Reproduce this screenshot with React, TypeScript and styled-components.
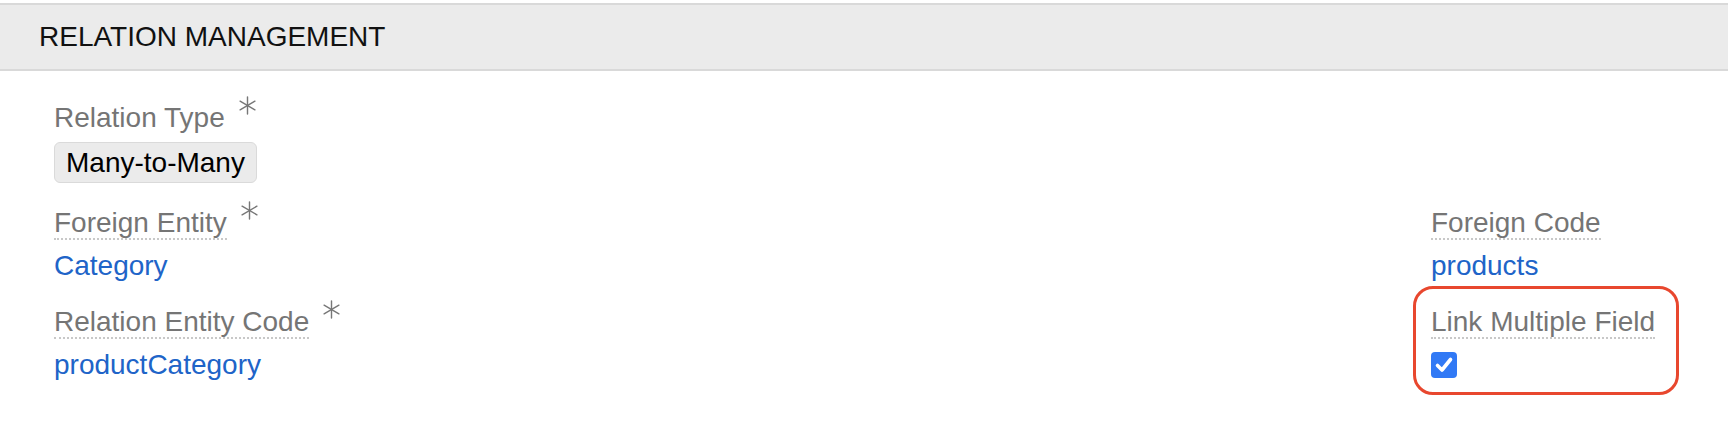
import React from 'react';
import styled, { createGlobalStyle } from 'styled-components';

const GlobalStyle = createGlobalStyle`
    body {
        margin: 0;
        background: #fff;
        font-family: "Liberation Sans", Arial, sans-serif;
    }
`;

const Panel = styled.section`
    padding-top: 3px;
`;

const PanelHeader = styled.div`
    box-sizing: border-box;
    height: 68px;
    display: flex;
    align-items: center;
    padding-left: 39px;
    background: #ebebeb;
    border-top: 2px solid #d9d9d9;
    border-bottom: 2px solid #d9d9d9;
`;

const Title = styled.h2`
    margin: 0;
    font-size: 28px;
    font-weight: 400;
    color: #111;
`;

const Body = styled.div`
    display: flex;
    flex-direction: column;
    gap: 25px;
    padding: 32px 54px 48px;
`;

const Row = styled.div`
    display: grid;
    grid-template-columns: 1fr 243px;
`;

const Field = styled.div`
    display: flex;
    flex-direction: column;
    align-items: flex-start;
`;

const LabelRow = styled.div`
    display: flex;
    align-items: flex-start;
`;

const Label = styled.span<{ $hint?: boolean }>`
    font-size: 28px;
    line-height: 30px;
    color: #757575;
    border-bottom: 2px ${p => (p.$hint ? 'dotted #c8c8c8' : 'solid transparent')};
`;

const Star = styled.svg`
    margin: -7px 0 0 13px;
    width: 19px;
    height: 19px;
`;

const Value = styled.div`
    margin-top: 10px;
    font-size: 28px;
    line-height: 32px;
    height: 32px;
    color: #2064c8;
    display: flex;
    align-items: center;
`;

const Badge = styled.span`
    margin-top: 7px;
    box-sizing: border-box;
    height: 41px;
    padding: 0 11px;
    display: inline-flex;
    align-items: center;
    font-size: 28px;
    color: #000;
    background: #ebebeb;
    border: 1px solid #dadada;
    border-radius: 6px;
`;

const Highlight = styled.div`
    position: relative;

    &::before {
        content: '';
        position: absolute;
        top: -21px;
        left: -18px;
        right: -24px;
        bottom: -14px;
        border: 3px solid #e8472e;
        border-radius: 20px;
        pointer-events: none;
    }
`;

const Required = () => (
    <Star viewBox="0 0 20 20">
        <g stroke="#777" strokeWidth="1.5" strokeLinecap="round">
            <line x1="10" y1="1" x2="10" y2="19" />
            <line x1="2.2" y1="5.5" x2="17.8" y2="14.5" />
            <line x1="2.2" y1="14.5" x2="17.8" y2="5.5" />
        </g>
    </Star>
);

const CheckedBox = () => (
    <svg width="26" height="26" viewBox="0 0 26 26">
        <rect width="26" height="26" rx="4" fill="#3179f5" />
        <path d="M6.5 13.5 L11 18 L19.5 7.5" fill="none" stroke="#fff" strokeWidth="3.6" strokeLinecap="round" strokeLinejoin="round" />
    </svg>
);

const FieldLabel = ({ text, hint, required }: { text: string; hint?: boolean; required?: boolean }) => (
    <LabelRow>
        <Label $hint={hint}>{text}</Label>
        {required && <Required />}
    </LabelRow>
);

export default function App() {
    return (
        <>
            <GlobalStyle />
            <Panel>
                <PanelHeader>
                    <Title>RELATION MANAGEMENT</Title>
                </PanelHeader>
                <Body>
                    <Row>
                        <Field>
                            <FieldLabel text="Relation Type" required />
                            <Badge>Many-to-Many</Badge>
                        </Field>
                    </Row>
                    <Row>
                        <Field>
                            <FieldLabel text="Foreign Entity" hint required />
                            <Value>Category</Value>
                        </Field>
                        <Field>
                            <FieldLabel text="Foreign Code" hint />
                            <Value>products</Value>
                        </Field>
                    </Row>
                    <Row>
                        <Field>
                            <FieldLabel text="Relation Entity Code" hint required />
                            <Value>productCategory</Value>
                        </Field>
                        <Field>
                            <Highlight>
                                <FieldLabel text="Link Multiple Field" hint />
                                <Value>
                                    <CheckedBox />
                                </Value>
                            </Highlight>
                        </Field>
                    </Row>
                </Body>
            </Panel>
        </>
    );
}
